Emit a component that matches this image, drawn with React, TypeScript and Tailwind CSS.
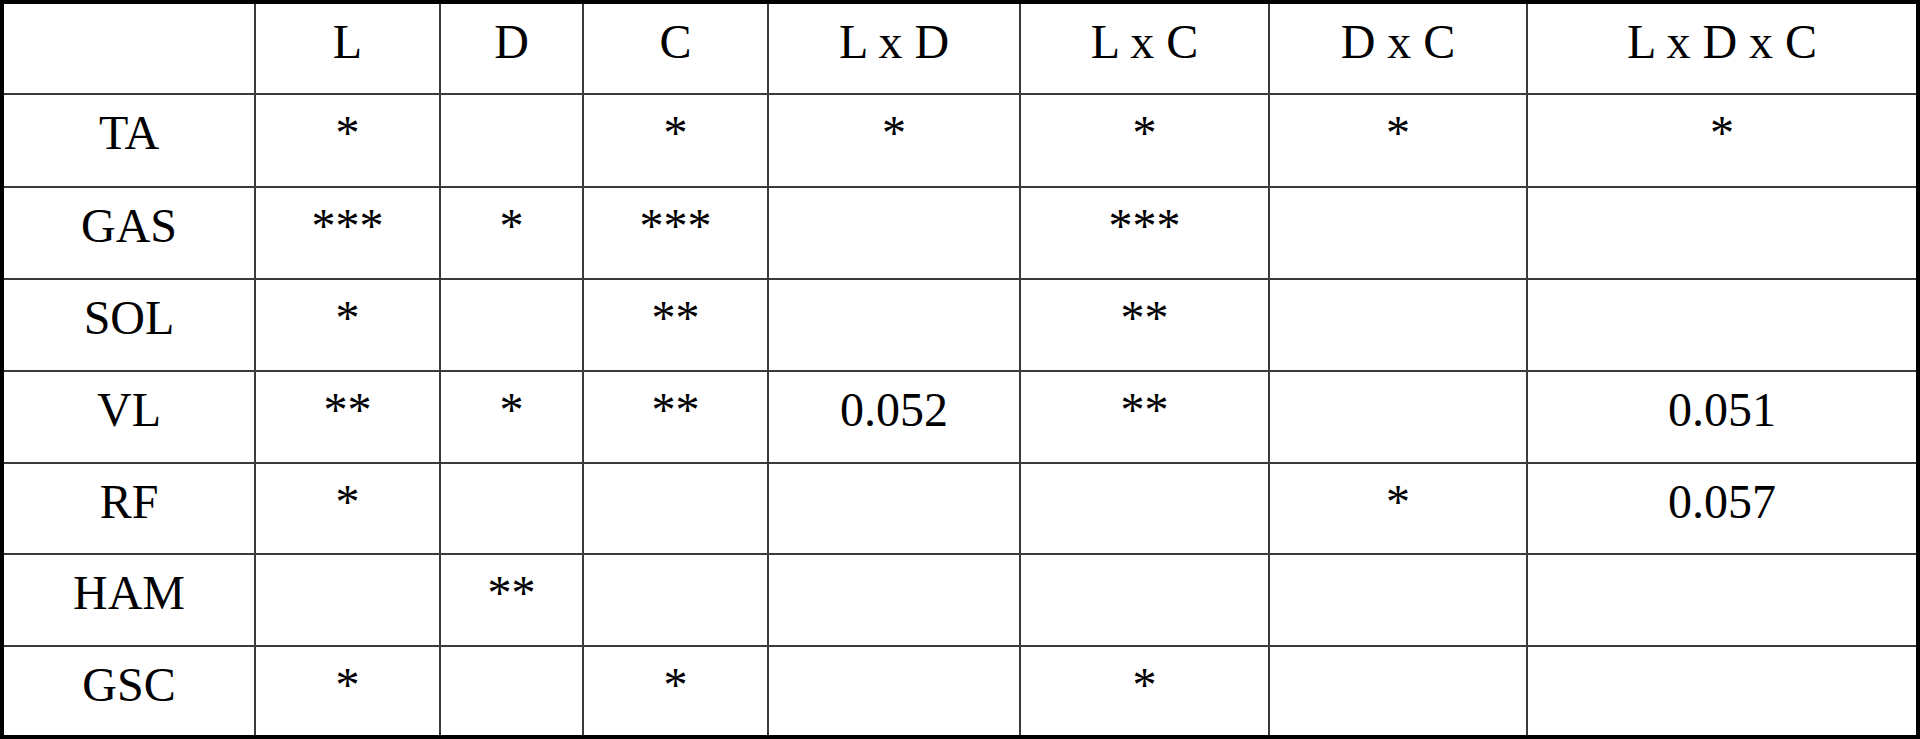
const HEADERS = ["", "L", "D", "C", "L x D", "L x C", "D x C", "L x D x C"];

const ROWS: string[][] = [
  ["TA", "*", "", "*", "*", "*", "*", "*"],
  ["GAS", "***", "*", "***", "", "***", "", ""],
  ["SOL", "*", "", "**", "", "**", "", ""],
  ["VL", "**", "*", "**", "0.052", "**", "", "0.051"],
  ["RF", "*", "", "", "", "", "*", "0.057"],
  ["HAM", "", "**", "", "", "", "", ""],
  ["GSC", "*", "", "*", "", "*", "", ""],
];

function Cell({ children }: { children?: string }) {
  return (
    <div className="flex items-start justify-center bg-white pt-[14px] text-[48px] leading-none text-black">
      {children}
    </div>
  );
}

export default function App() {
  return (
    <div className="h-[739px] w-[1920px] bg-white font-['Liberation_Serif','Times_New_Roman',serif]">
      <div className="h-full w-full border-4 border-black bg-[#3a3a3a]">
        <div className="grid h-full grid-cols-[250px_183px_141px_183px_250px_247px_256px_388px] grid-rows-[89px_91px_90px_90px_90px_89px_90px_88px] gap-[2px]">
          {HEADERS.map((h, i) => (
            <Cell key={`h-${i}`}>{h}</Cell>
          ))}
          {ROWS.map((row, r) =>
            row.map((value, c) => <Cell key={`${r}-${c}`}>{value}</Cell>),
          )}
        </div>
      </div>
    </div>
  );
}
